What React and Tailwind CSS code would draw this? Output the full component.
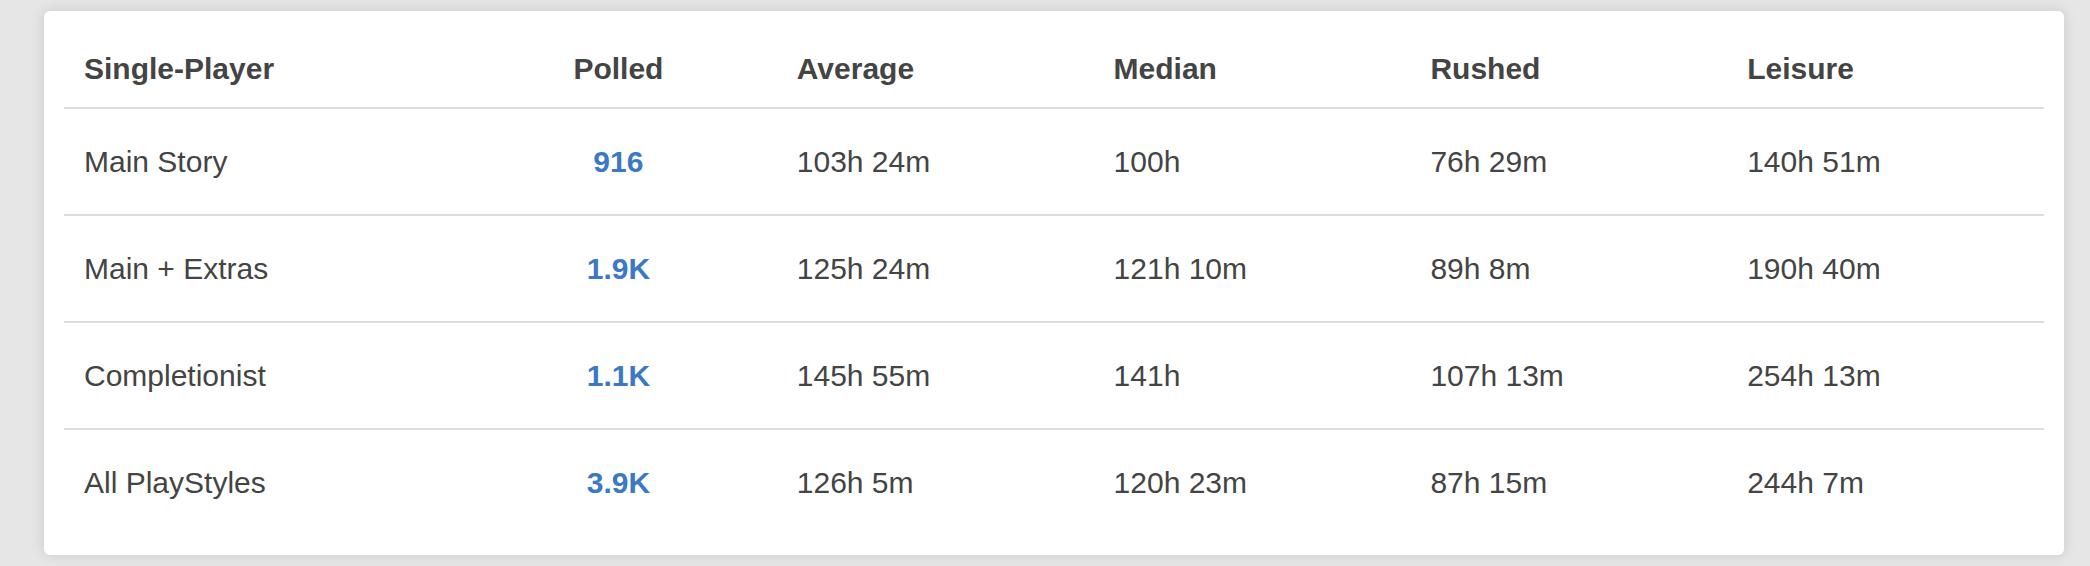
const rows = [
  { label: "Main Story", polled: "916", average: "103h 24m", median: "100h", rushed: "76h 29m", leisure: "140h 51m" },
  { label: "Main + Extras", polled: "1.9K", average: "125h 24m", median: "121h 10m", rushed: "89h 8m", leisure: "190h 40m" },
  { label: "Completionist", polled: "1.1K", average: "145h 55m", median: "141h", rushed: "107h 13m", leisure: "254h 13m" },
  { label: "All PlayStyles", polled: "3.9K", average: "126h 5m", median: "120h 23m", rushed: "87h 15m", leisure: "244h 7m" },
];

const cols = "grid grid-cols-[20%_16%_16%_16%_16%_16%]";

const App = () => {
  return (
    <div className="min-h-[566px] w-full bg-[#e6e6e6] pt-[11px] pl-[44px] pr-[26px] font-[family-name:'Liberation_Sans',Arial,sans-serif] text-[30px] leading-[43px] text-[#444]">
      <div className="w-[2020px] rounded-[6px] bg-white px-[20px] pt-[18px] pb-[20px] shadow-[0_0_14px_rgba(0,0,0,0.13)]">
        {/* header */}
        <div className={`${cols} h-[78px] items-center font-bold`}>
          <div className="pl-[20px]">Single-Player</div>
          <div className="text-center">Polled</div>
          <div className="pl-[20px]">Average</div>
          <div className="pl-[20px]">Median</div>
          <div className="pl-[20px]">Rushed</div>
          <div className="pl-[20px]">Leisure</div>
        </div>

        {rows.map((r) => (
          <div key={r.label} className={`${cols} h-[107px] items-center border-t-2 border-[#dddddd]`}>
            <div className="pl-[20px]">{r.label}</div>
            <div className="text-center font-bold text-[#3b79c4]">{r.polled}</div>
            <div className="pl-[20px]">{r.average}</div>
            <div className="pl-[20px]">{r.median}</div>
            <div className="pl-[20px]">{r.rushed}</div>
            <div className="pl-[20px]">{r.leisure}</div>
          </div>
        ))}
      </div>
    </div>
  );
};

export default App;
